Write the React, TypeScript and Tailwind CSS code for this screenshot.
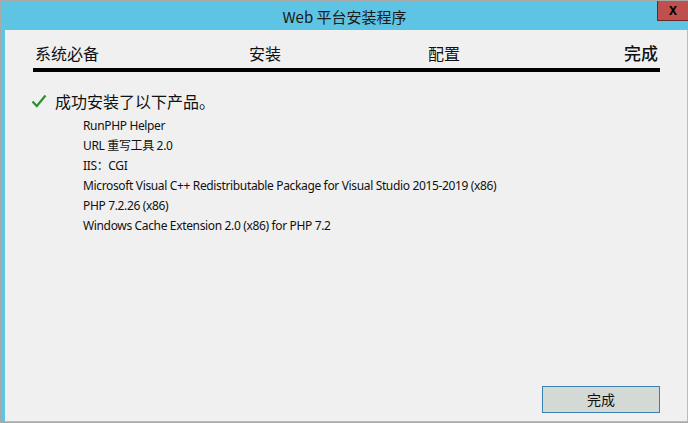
import React from "react";

const cjk = { fontFamily: '"Noto Sans CJK SC", "Noto Sans", sans-serif' };
const latin = { fontFamily: '"Noto Sans", "Noto Sans CJK SC", sans-serif' };

const items = [
  "RunPHP Helper",
  "URL 重写工具 2.0",
  "IIS：CGI",
  "Microsoft Visual C++ Redistributable Package for Visual Studio 2015-2019 (x86)",
  "PHP 7.2.26 (x86)",
  "Windows Cache Extension 2.0 (x86) for PHP 7.2",
];

export default function App() {
  return (
    <div className="w-[688px] h-[423px] bg-[#5ec4e4] border border-[#a8a8a8] border-r-0 flex flex-col overflow-hidden">
      <div className="relative h-[29px] flex items-center justify-center shrink-0">
        <span className="text-[15px] text-[#1a1a1a] leading-none pt-[1px]" style={cjk}>
          Web 平台安装程序
        </span>
        <div className="absolute right-0 top-[-1px] w-[31px] h-[21px] bg-[#c0504d] border border-[#6b2a28] border-r-0 flex items-center justify-center">
          <span className="text-[12px] font-bold text-black leading-none" style={latin}>X</span>
        </div>
      </div>
      <div className="flex-1 ml-[4px] bg-[#f0f0f0] flex flex-col pl-[28px] pr-[27px] pt-[13px] border-r border-[#bcbcbc]">
        <div className="flex items-end text-[16px] leading-[20px] text-[#111]" style={cjk}>
          <span className="ml-[2px]">系统必备</span>
          <span className="ml-[150px]">安装</span>
          <span className="ml-[147px]">配置</span>
          <span className="ml-auto mr-[2px] text-[17px] font-medium">完成</span>
        </div>
        <div className="h-[4px] bg-black mt-[5px]" />
        <div className="flex items-center mt-[19px]">
          <svg width="16" height="14" viewBox="0 0 16 14" className="ml-[-2px]">
            <path d="M1.5 7.5 L5.8 12 L14.5 1.5" fill="none" stroke="#2f8f2f" strokeWidth="2.2" />
          </svg>
          <span className="ml-[8px] text-[16px] leading-[20px] text-[#111]" style={cjk}>
            成功安装了以下产品。
          </span>
        </div>
        <div className="flex flex-col ml-[50px] mt-[5px]">
          {items.map((t) => (
            <div key={t} className="h-[20px] leading-[20px] text-[12px] tracking-[-0.35px] text-[#111]" style={latin}>
              {t}
            </div>
          ))}
        </div>
        <div className="flex-1" />
        <div className="flex justify-end mb-[8px]">
          <div className="w-[118px] h-[27px] bg-[#d4d9d5] border border-[#3c7fb1] flex items-center justify-center text-[14px] text-[#111]" style={cjk}>
            完成
          </div>
        </div>
      </div>
      <div className="h-[1px] bg-[#bcbcbc] ml-[4px]" />
    </div>
  );
}
